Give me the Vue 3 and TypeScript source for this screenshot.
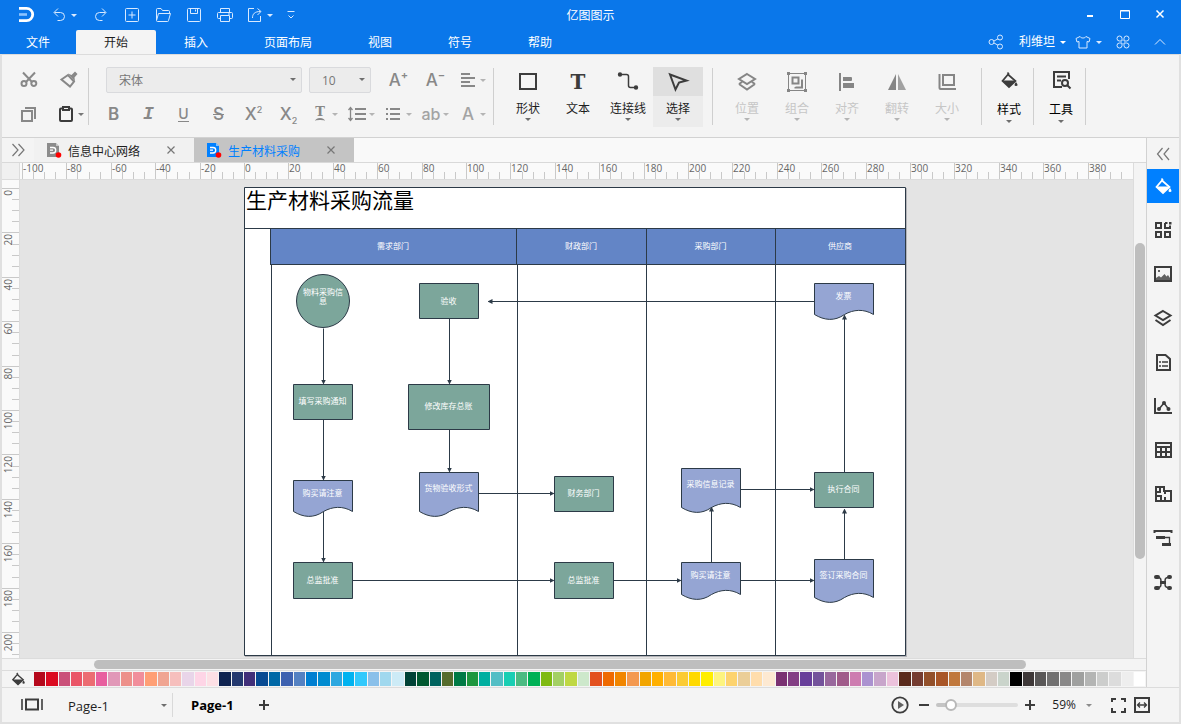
<script setup lang="ts">
import { computed, h, ref } from 'vue'

type Part = { d: string; w?: number; fill?: boolean; o?: number }

const s = (d: string, w = 1): Part => ({ d, w })
const f = (d: string, o = 1): Part => ({ d, fill: true, o })
const ring = (x: number, y: number, r: number) =>
  `M${x - r} ${y}a${r} ${r} 0 1 0 ${2 * r} 0a${r} ${r} 0 1 0 ${-2 * r} 0z`

const icons: Record<string, Part[]> = {
  undo: [s('M9 3.5L5 7.5L9 11.5M5.5 7.5H11.5a4 4 0 0 1 0 8H8.5')],
  redo: [s('M11 3.5L15 7.5L11 11.5M14.5 7.5H8.5a4 4 0 0 0 0 8H11.5')],
  add: [s('M4.5 3.5h11a1 1 0 0 1 1 1v11a1 1 0 0 1-1 1h-11a1 1 0 0 1-1-1v-11a1 1 0 0 1 1-1zM10 6.5v7M6.5 10h7')],
  folder: [s('M3.5 15V4.5a1 1 0 0 1 1-1H8l1.5 2h6a1 1 0 0 1 1 1v1.5M3.5 15.5L5.5 8.5h12l-2 7a1 1 0 0 1-1 1h-10a1 1 0 0 1-1-1z')],
  save: [s('M4.5 3.5h11a1 1 0 0 1 1 1v11a1 1 0 0 1-1 1h-11a1 1 0 0 1-1-1v-11a1 1 0 0 1 1-1zM6.5 3.5v5h7v-5M11.5 4.5v2')],
  print: [s('M5.5 7V3.5h9V7M5.5 13.5h-2a1 1 0 0 1-1-1v-4a1 1 0 0 1 1-1h13a1 1 0 0 1 1 1v4a1 1 0 0 1-1 1h-2M5.5 10.5h9v6h-9zM13 9h2')],
  exportTo: [s('M9 3.5H3.5v13h12V11M7.5 13c0-4 2-6.500 8-6.500M12.5 3.5l3.500 3l-3.500 3.500')],
  more: [s('M6.5 6.5h7M7.5 10.5l2.500 2.500l2.500-2.500')],
  share: [s(ring(5.5, 10, 2.5)), s(ring(14, 5.5, 2.5)), s(ring(14, 14.5, 2.5)), s('M8 9l4-2.200M8 11l4 2.200')],
  shirt: [s('M7 4.5L3 6.5l1 3.500l2-.500v6.500h8V9.5l2 .500l1-3.500l-4-2c-1 2-5 2-6 0z')],
  clover: [s('M9 9H6.5a2.500 2.500 0 1 1 2.500-2.500zM11 9h2.500A2.500 2.500 0 1 0 11 6.5zM9 11H6.5A2.500 2.500 0 1 0 9 13.5zM11 11h2.500a2.500 2.500 0 1 1-2.500 2.500z')],
  up: [s('M5 12.5l5-5l5 5')],
  min: [f('M7 10h6v2H7z')],
  max: [s('M5.5 5.5h9v8h-9zM5.5 6h9')],
  close: [s('M6.5 5.5l7 7M13.5 5.5l-7 7', 1.5)],
  cut: [s(ring(5, 13.5, 2.5), 2), s(ring(14.8, 13.5, 2.5), 2), s('M4 2.5L13 12M16 2.5L7 12', 2)],
  brush: [s('M2.5 9.5L9 5l6 6.500l-4 5z', 2), f('M9 3.5L12.5 5L16 1.5L18.5 4L15.5 7.5L16 11.5z')],
  copy: [s('M3 7h10v10H3z', 2), s('M6 4h10v11', 2)],
  paste: [s('M6.5 4.5H5a1 1 0 0 0-1 1V16a1 1 0 0 0 1 1h10a1 1 0 0 0 1-1V5.5a1 1 0 0 0-1-1h-1.500', 2), s('M7 3h6v3H7z', 2)],
  align: [s('M3 4h9M3 8h14M3 12h9M3 16h14', 2)],
  spacing: [s('M8 5h11M8 10h11M8 15h11', 2), s('M3.5 3.5v13M1.5 6l2-2.500l2 2.500M1.5 14l2 2.500l2-2.500', 1.3)],
  list: [s('M6 5h10M6 10h10M6 15h10M2 5h2M2 10h2M2 15h2', 2)],
  shape: [s('M4 4h16v15H4z', 2)],
  connector: [s('M6 4.5h4.500a2 2 0 0 1 2 2v9a2 2 0 0 0 2 2H19', 1.5), f(ring(4, 4.5, 2.2)), f(ring(20, 17.5, 2.2))],
  pointer: [s('M4 4.5L20.5 10.5L13 12.5L9.5 19.5z', 2)],
  layers: [s('M12 4l8 5l-8 5l-8-5zM4 14l8 5.500l8-5.500M4 14l3-2M20 14l-3-2', 2)],
  group: [s('M3.5 3.5h17v17h-17z'), f('M2 2h3v3H2zM19 2h3v3h-3zM2 19h3v3H2zM19 19h3v3h-3z'), s('M7.5 7.5h6v6h-6zM16 10.5h1v7h-6.500V17', 2)],
  alignObj: [s('M5 3v18', 2), f('M8 7h8a1 1 0 0 1 1 1v2a1 1 0 0 1-1 1H8zM8 13h11v5H8z')],
  flip: [f('M11 4v16H3z'), f('M13 4v16h8z', 0.75)],
  size: [s('M8 5h11v10H8z', 2), s('M4.5 4v14a1 1 0 0 0 1 1H21', 2)],
  bucket: [s('M8.5 2.5l1.500 2M9 4.5l7.500 6.500l-6.500 6L3.5 11z', 1.7), f('M3.5 10.5h13L10 17zM17 12c2 2.500 2 4 0 4s-2-1.500 0-4z')],
  tools: [s('M20 11V4H5v15h8', 2), s('M8 8.5h9M8 12.5h4', 2), s(ring(16, 15, 3), 2), s('M18 17l3.500 3.500', 2)],
  open: [s('M4.5 4l5.500 6l-5.500 6M10.5 4l5.500 6l-5.500 6', 1.2)],
  collapse: [s('M9.5 4l-5 6l5 6M16 4l-5 6l5 6', 1.2)],
  tabClose: [s('M6.5 6.5l7 7M13.5 6.5l-7 7', 1.2)],
  library: [s('M3 3h5v5H3zM12 3h2.500M17 5.5V8h-5V3M3 12h5v5H3zM12 12h5v5h-5z', 2), f('M16 2h2.500v2.500H16z')],
  image: [s('M2 3h16v14H2z', 2), f('M3 16v-2l3-2l2 1.500L11.5 10l2 2.500L15 11l2 3v2zM5 6h2v2H5z', 0.8)],
  stack: [s('M10 3l7.500 4.500l-7.500 4.500l-7.500-4.500zM2.5 12L10 17l7.500-5', 2)],
  note: [s('M4 3h8.500l4.500 4v11H4z', 2), s('M6 10h2M9 10h6M6 14h2M9 14h6', 1.5)],
  chart: [s('M2 2v15h17', 2), s('M6 13L11 7l4.500 6', 1.5), f(ring(6, 13, 2)), f(ring(11, 7, 2)), f(ring(15.5, 13, 2))],
  table: [s('M3 3h15v14H3z', 2), s('M3 7h15M8 8v9M13 8v9M3 12h15', 2)],
  plan: [s('M3 3h8v4h7v10H3zM7 3v5H3M3 12h5v5M12 13v4M12 10V7', 2)],
  roller: [s('M1.5 5V3h17v2', 2), f('M3 8h9v3H3zM9 15h9v3H9z'), s('M12 9.5h4.500V15', 1.3)],
  mind: [f('M1 5a2 2 0 0 1 2-2h2a2 2 0 0 1 0 4H3a2 2 0 0 1-2-2zM14 5a2 2 0 0 1 2-2h1a2 2 0 0 1 0 4h-1a2 2 0 0 1-2-2zM1 16a2 2 0 0 1 2-2h2a2 2 0 0 1 0 4H3a2 2 0 0 1-2-2zM14 16a2 2 0 0 1 2-2h1a2 2 0 0 1 0 4h-1a2 2 0 0 1-2-2zM7 9h6v3H7z'), s('M5 5.5c3 0 3 2 3 5s0 5-3 5M15 5.5c-3 0-3 2-3 5s0 5 3 5', 1.5)],
  pages: [s('M6 6.500h12v10H6z', 2), s('M2 6v11M22 6v11', 1.6)],
  plus: [s('M10 5v10M5 10h10', 2)],
  minus: [s('M5 10h10', 2)],
  play: [s(ring(10, 10, 7.7), 1.8), f('M8 6l6 4l-6 4z', 0.8)],
  full: [s('M4 7V4h4M13 4h4v3M17 13v4h-4M8 17H4v-4', 2)],
  fit: [s('M3 3h14v14H3z', 2), s('M5.5 10h9M8 7.5L5.5 10L8 12.5M12 7.5l2.500 2.500l-2.500 2.500', 1.3)],
}

const Icon = (props: { name: string; size?: number }) => {
  const n = props.size ?? 20
  return h(
    'svg',
    { width: n, height: n, viewBox: `0 0 ${n} ${n}`, 'aria-hidden': 'true' },
    icons[props.name].map((p) =>
      h('path', {
        d: p.d,
        fill: p.fill ? 'currentColor' : 'none',
        stroke: p.fill ? 'none' : 'currentColor',
        'stroke-width': p.w,
        opacity: p.o,
      }),
    ),
  )
}
Icon.props = ['name', 'size']

const quick = [
  { icon: 'redo', label: '重做' },
  { icon: 'add', label: '新建' },
  { icon: 'folder', label: '打开' },
  { icon: 'save', label: '保存' },
  { icon: 'print', label: '打印' },
]
const menus = ['文件', '开始', '插入', '页面布局', '视图', '符号', '帮助']
const menu = ref('开始')

const tools = ['形状', '文本', '连接线', '选择'] as const
const toolIcons: Record<string, string> = { 形状: 'shape', 连接线: 'connector', 选择: 'pointer' }
const tool = ref('选择')
const arrange = [
  { icon: 'layers', label: '位置' },
  { icon: 'group', label: '组合' },
  { icon: 'alignObj', label: '对齐' },
  { icon: 'flip', label: '翻转' },
  { icon: 'size', label: '大小' },
]

const docs = ['信息中心网络', '生产材料采购']
const doc = ref('生产材料采购')

const panels = [
  { icon: 'bucket', label: '填充' },
  { icon: 'library', label: '符号库' },
  { icon: 'image', label: '图片' },
  { icon: 'stack', label: '图层' },
  { icon: 'note', label: '注释' },
  { icon: 'chart', label: '图表' },
  { icon: 'table', label: '表格' },
  { icon: 'plan', label: '平面图' },
  { icon: 'roller', label: '主题' },
  { icon: 'mind', label: '导图' },
]
const panel = ref('填充')

const ORIGIN_X = 224
const ORIGIN_Y = 8
const UNIT = 2.22
const ticks = (origin: number, from: number, to: number) => {
  const out: { pos: number; value: number; major: boolean }[] = []
  for (let v = from; v <= to; v += 5) {
    out.push({ pos: Math.round(origin + v * UNIT), value: v, major: v % 20 === 0 })
  }
  return out
}
const xTicks = ticks(ORIGIN_X, -100, 395)
const yTicks = ticks(ORIGIN_Y, 0, 210)

const heads = [
  { x: 26, w: 246, label: '需求部门' },
  { x: 272, w: 130, label: '财政部门' },
  { x: 402, w: 129, label: '采购部门' },
  { x: 531, w: 130, label: '供应商' },
]
const lanes = [27, 273, 402, 531]

type Node = { kind: 'rect' | 'doc'; x: number; y: number; w: number; h: number; label: string; ty: number }
const nodes: Node[] = [
  { kind: 'rect', x: 175, y: 96, w: 59, h: 35, label: '验收', ty: 114 },
  { kind: 'rect', x: 49, y: 197, w: 59, h: 35, label: '填写采购通知', ty: 214 },
  { kind: 'rect', x: 164, y: 197, w: 81, h: 45, label: '修改库存总账', ty: 219 },
  { kind: 'doc', x: 49, y: 293, w: 59, h: 35, label: '购买请注意', ty: 306 },
  { kind: 'doc', x: 175, y: 285, w: 59, h: 43, label: '货物验收形式', ty: 301 },
  { kind: 'rect', x: 49, y: 375, w: 59, h: 36, label: '总监批准', ty: 393 },
  { kind: 'rect', x: 310, y: 289, w: 59, h: 35, label: '财务部门', ty: 306 },
  { kind: 'rect', x: 310, y: 375, w: 59, h: 36, label: '总监批准', ty: 393 },
  { kind: 'doc', x: 437, y: 281, w: 59, h: 43, label: '采购信息记录', ty: 297 },
  { kind: 'doc', x: 437, y: 375, w: 59, h: 36, label: '购买请注意', ty: 388 },
  { kind: 'doc', x: 570, y: 96, w: 59, h: 35, label: '发票', ty: 109 },
  { kind: 'rect', x: 570, y: 285, w: 59, h: 35, label: '执行合同', ty: 302 },
  { kind: 'doc', x: 570, y: 372, w: 59, h: 42, label: '签订采购合同', ty: 388 },
]
const outline = (n: Node) =>
  n.kind === 'rect'
    ? `M${n.x} ${n.y}h${n.w}v${n.h}h${-n.w}z`
    : `M${n.x} ${n.y}h${n.w}v${n.h - 4}c-10 -6 -20 -5 -29 0c-10 7 -20 6 -30 0z`

const links = [
  'M79 141V196', 'M79 232V292', 'M79 324V374', 'M205 131V196', 'M205 242V284',
  'M234 306H309', 'M108 393H309', 'M369 393H436', 'M496 393H569', 'M496 302H569',
  'M467 375V320', 'M600 372V322', 'M600 285V128', 'M570 114H244',
]

const palette = (
  'b5081b db0a20 ca5079 ea5567 ec6c72 e85f9f e198b8 ed908a f18e9b ff9f75 f0a592 f6bfbd e9d5e9 fed5e6 fde0e5 ' +
  '0e2350 24396f 412f79 074a92 0068a6 3d61b0 5481c2 007fd1 008bd0 2da8e0 00b3f0 32c9fc 8ac0ea a0d8ee cdebf6 ' +
  '004236 005830 00635f 566c2d 007a45 1e963e 00afa0 53bec5 19ceb3 4bbb82 00b156 7fba12 a3d064 bfd843 cde8cb ' +
  'e3511f ef6a00 f18600 f4994f f2a500 ffb000 ffba36 fbcb34 ffd900 ffee00 fdf47f fdd36e ebce98 ffddac fde9d2 ' +
  '7a3172 833e84 683f9a 74539b 99689d a05b8a cd7cb0 ab92d0 c8a5cb ecc2dc 5a2a1c 753c31 93502a a95627 c0783d ' +
  'b4866c dfb886 d4ccc5 cad4cb 000000 3e3838 595757 717070 898888 9fa09f b4b5b4 cccdcc dcdcdc eeeeee ffffff'
).split(' ')

const slider = ref(13)
const zoomText = computed(() => `${Math.max(1, Number(slider.value) + 46)}%`)
const nudge = (by: number) => {
  slider.value = Math.min(100, Math.max(0, Number(slider.value) + by))
}
</script>

<template>
  <div class="app">
    <header class="top">
      <div class="titlebar">
        <div class="quick">
          <svg class="logo" width="20" height="20" viewBox="0 0 20 20" aria-hidden="true">
            <path d="M2 3.300h7.500a6.200 6.200 0 0 1 0 12.400H2" fill="none" stroke="#fff" stroke-width="2.800" />
            <path d="M2 9.500h8" stroke="#8cc4ff" stroke-width="2.600" />
          </svg>
          <button class="split undo" aria-label="撤销"><Icon name="undo" /><i class="caret"></i></button>
          <button v-for="q in quick" :key="q.icon" class="q" :aria-label="q.label"><Icon :name="q.icon" /></button>
          <button class="split" aria-label="导出"><Icon name="exportTo" /><i class="caret"></i></button>
          <button class="q narrow" aria-label="更多"><Icon name="more" /></button>
        </div>
        <div class="apptitle">亿图图示</div>
        <div class="winctl">
          <button aria-label="最小化"><Icon name="min" /></button>
          <button aria-label="最大化"><Icon name="max" /></button>
          <button aria-label="关闭"><Icon name="close" /></button>
        </div>
      </div>
      <div class="menubar">
        <nav>
          <button v-for="m in menus" :key="m" :class="{ file: m === '文件', on: m === menu }" @click="menu = m">{{ m }}</button>
        </nav>
        <div class="account">
          <button aria-label="分享"><Icon name="share" /></button>
          <button class="user">利维坦<i class="caret"></i></button>
          <button class="skin" aria-label="皮肤"><Icon name="shirt" /><i class="caret"></i></button>
          <button class="apps" aria-label="应用"><Icon name="clover" /></button>
          <button aria-label="收起"><Icon name="up" /></button>
        </div>
      </div>
    </header>

    <div class="frame">
      <section class="ribbon">
        <div class="clip">
          <button aria-label="剪切"><Icon name="cut" /></button>
          <button class="brush" aria-label="格式刷"><Icon name="brush" /></button>
          <button aria-label="复制"><Icon name="copy" /></button>
          <button class="split dark" aria-label="粘贴"><Icon name="paste" /><i class="caret"></i></button>
        </div>
        <div class="sep"></div>
        <div class="font">
          <div class="line first">
            <label class="pick family">
              <select aria-label="字体"><option>宋体</option></select><i class="caret"></i>
            </label>
            <label class="pick points">
              <select aria-label="字号"><option>10</option></select><i class="caret"></i>
            </label>
            <button class="wide" aria-label="增大字号"><span class="g">A<sup class="sign">+</sup></span></button>
            <button class="wide" aria-label="减小字号"><span class="g">A<sup class="sign">−</sup></span></button>
            <button class="split" aria-label="对齐方式"><Icon name="align" /><i class="caret"></i></button>
          </div>
          <div class="line">
            <button class="fmt" aria-label="粗体"><span class="g bold">B</span></button>
            <button class="fmt" aria-label="斜体"><span class="g ital">I</span></button>
            <button class="fmt" aria-label="下划线"><span class="g under">U</span></button>
            <button class="fmt" aria-label="删除线"><span class="g strike">S</span></button>
            <button class="fmt" aria-label="上标"><span class="g">X<sup>2</sup></span></button>
            <button class="fmt" aria-label="下标"><span class="g">X<sub>2</sub></span></button>
            <button class="split" aria-label="文字效果"><span class="g slab">T</span><i class="caret"></i></button>
            <button class="split" aria-label="行距"><Icon name="spacing" /><i class="caret"></i></button>
            <button class="split" aria-label="项目符号"><Icon name="list" /><i class="caret"></i></button>
            <button class="split light" aria-label="大小写"><span class="g ab">ab</span><i class="caret"></i></button>
            <button class="split light" aria-label="字体颜色"><span class="g">A</span><i class="caret"></i></button>
          </div>
        </div>
        <div class="sep near"></div>
        <div class="bigs">
          <button v-for="t in tools" :key="t" class="big" :class="{ on: t === tool }" @click="tool = t">
            <span class="pic">
              <Icon v-if="toolIcons[t]" :name="toolIcons[t]" :size="24" />
              <span v-else class="slabbig">T</span>
            </span>
            <span class="cap">{{ t }}</span>
            <i v-if="t !== '文本'" class="caret"></i>
          </button>
        </div>
        <div class="sep"></div>
        <div class="bigs">
          <button v-for="a in arrange" :key="a.icon" class="big off" disabled>
            <span class="pic"><Icon :name="a.icon" :size="24" /></span>
            <span class="cap">{{ a.label }}</span>
            <i class="caret"></i>
          </button>
        </div>
        <div class="sep"></div>
        <button class="big tall"><span class="pic"><Icon name="bucket" /></span><span class="cap">样式</span><i class="caret"></i></button>
        <div class="sep"></div>
        <button class="big tall"><span class="pic"><Icon name="tools" :size="24" /></span><span class="cap">工具</span><i class="caret"></i></button>
        <div class="sep"></div>
      </section>

      <div class="work">
        <main class="main">
          <div class="tabs">
            <button class="expand" aria-label="展开"><Icon name="open" /></button>
            <div v-for="d in docs" :key="d" class="tab" :class="{ on: d === doc }">
              <button class="name" @click="doc = d">
                <svg width="16" height="16" viewBox="0 0 16 16" aria-hidden="true">
                  <path d="M0 1h9l3 3v11H0z" fill="currentColor" />
                  <path d="M9 1v3h3z" fill="#fff" opacity="0.500" />
                  <path d="M3 5.500h3a2.500 2.500 0 0 1 0 5.500H3M3 8.200h3" fill="none" stroke="#fff" stroke-width="1.300" />
                  <circle cx="11.500" cy="13" r="2.800" fill="#f00" />
                </svg>
                <span>{{ d }}</span>
              </button>
              <button class="x" aria-label="关闭标签"><Icon name="tabClose" /></button>
            </div>
          </div>

          <div class="stage">
            <div class="corner"></div>
            <svg class="ruler hr" aria-hidden="true">
              <g v-for="t in xTicks" :key="t.value">
                <rect :x="t.pos" :y="t.major ? 0 : 9" width="1" :height="t.major ? 16 : 7" />
                <text v-if="t.major" :x="t.pos + 1" y="9">{{ t.value }}</text>
              </g>
            </svg>
            <div class="vscroll"><div class="gap"></div><div class="thumb"></div><div class="rest"></div></div>
            <svg class="ruler vr" aria-hidden="true">
              <g v-for="t in yTicks" :key="t.value">
                <rect :x="t.major ? 0 : 10" :y="t.pos" :width="t.major ? 17 : 7" height="1" />
                <text v-if="t.major" :transform="`translate(10 ${t.pos + 2}) rotate(-90)`" text-anchor="end">{{ t.value }}</text>
              </g>
            </svg>
            <div class="canvas">
              <svg class="sheet" width="663" height="471" viewBox="0 0 663 471" role="img" aria-label="生产材料采购流量">
                <defs>
                  <marker id="tip" markerWidth="5" markerHeight="5" refX="4" refY="2.500" orient="auto" markerUnits="userSpaceOnUse">
                    <path d="M0 0L5 2.500L0 5z" fill="#2c3a47" />
                  </marker>
                </defs>
                <rect x="1" y="1" width="662" height="469" fill="#b4b4b8" />
                <g transform="translate(0.500 0.500)" fill="none" stroke="#2c3a47">
                  <path d="M0 0h661v468H0zM0 41h661" fill="#fff" />
                  <path v-for="x in lanes" :key="x" :d="`M${x} 77V468`" />
                  <rect v-for="c in heads" :key="c.label" :x="c.x" y="41" :width="c.w" height="36" fill="#6385c6" />
                  <ellipse cx="78.500" cy="113.500" rx="26.500" ry="26.500" fill="#7ca69b" />
                  <path v-for="(n, i) in nodes" :key="i" :d="outline(n)" :fill="n.kind === 'rect' ? '#7ca69b' : '#95a5d3'" />
                  <path v-for="l in links" :key="l" :d="l" marker-end="url(#tip)" />
                </g>
                <text class="heading" x="2" y="21">生产材料采购流量</text>
                <g class="tags">
                  <text v-for="c in heads" :key="c.label" :x="c.x + c.w / 2" y="62">{{ c.label }}</text>
                  <text x="79" y="108">物料采购信</text>
                  <text x="79" y="117">息</text>
                  <text v-for="(n, i) in nodes" :key="i" :x="n.x + n.w / 2" :y="n.ty + 3">{{ n.label }}</text>
                </g>
              </svg>
            </div>
          </div>

          <div class="hscroll"><div class="gap"></div><div class="thumb"></div><div class="rest"></div></div>
          <div class="palette">
            <button class="fill" aria-label="填充颜色"><Icon name="bucket" /></button>
            <button v-for="c in palette" :key="c" class="sw" :style="{ background: '#' + c }" :aria-label="'#' + c"></button>
          </div>
        </main>

        <aside class="side">
          <button class="fold" aria-label="折叠"><Icon name="collapse" /></button>
          <button v-for="p in panels" :key="p.icon" :class="{ on: p.label === panel }" :aria-label="p.label" @click="panel = p.label">
            <Icon :name="p.icon" />
          </button>
        </aside>
      </div>

      <footer class="foot">
        <button class="pages" aria-label="页面视图"><Icon name="pages" :size="24" /></button>
        <label class="pagepick">
          <select aria-label="页面"><option>Page-1</option></select><i class="caret"></i>
        </label>
        <div class="bar"></div>
        <button class="page">Page-1</button>
        <button aria-label="添加页面"><Icon name="plus" /></button>
        <div class="right">
          <button aria-label="播放"><Icon name="play" /></button>
          <button aria-label="缩小" @click="nudge(-1)"><Icon name="minus" /></button>
          <input v-model="slider" type="range" min="0" max="100" aria-label="缩放" :style="{ '--fill': slider + '%' }" />
          <button aria-label="放大" @click="nudge(1)"><Icon name="plus" /></button>
          <button class="pct">{{ zoomText }}<i class="caret"></i></button>
          <button aria-label="全屏"><Icon name="full" /></button>
          <button aria-label="适应页面"><Icon name="fit" /></button>
        </div>
      </footer>
    </div>
  </div>
</template>

<style>
body {
  margin: 0;
  overflow: hidden;
}
</style>

<style scoped>
.app {
  height: 100vh;
  display: flex;
  flex-direction: column;
  font: 12px/16px "Open Sans", "Noto Sans CJK SC", sans-serif;
  color: #1e1e1e;
  background: #f4f4f4;
}
.app * {
  box-sizing: border-box;
}
button {
  display: flex;
  align-items: center;
  justify-content: center;
  padding: 0;
  border: 0;
  background: none;
  color: inherit;
  font: inherit;
  white-space: nowrap;
  flex: none;
}
svg {
  display: block;
  flex: none;
}
.caret {
  flex: none;
  border: 3px solid transparent;
  border-top-color: currentColor;
  border-bottom: 0;
}
.split {
  width: 37px;
  padding-left: 4px;
  gap: 2px;
  justify-content: flex-start;
}

.top {
  background: #0a77ea;
  color: #fff;
}
.titlebar {
  height: 30px;
  display: grid;
  grid-template-columns: 1fr auto 1fr;
  align-items: center;
}
.apptitle {
  padding-top: 2px;
}
.quick {
  display: flex;
  color: #d9eaff;
}
.logo {
  margin: 0 7px 0 17px;
}
.quick .split {
  padding-left: 5px;
}
.quick .undo {
  margin-right: 4px;
}
.q {
  width: 31px;
}
.q.narrow {
  width: 28px;
}
.winctl {
  display: flex;
  justify-content: flex-end;
  padding-right: 4px;
}
.winctl button {
  width: 35px;
}
.menubar {
  height: 24px;
  display: flex;
  justify-content: space-between;
}
nav {
  display: flex;
}
nav button {
  height: 24px;
  padding: 2px 28px 0;
}
nav .file {
  padding: 2px 26px 0;
}
nav .on {
  background: #f4f4f4;
  color: #1e1e1e;
  border-radius: 2px 2px 0 0;
}
.account {
  display: flex;
  align-items: center;
  padding-right: 11px;
  color: #d9eaff;
}
.account button:first-child {
  margin-right: 13px;
}
.account .user {
  color: #fff;
  gap: 5px;
  margin-right: 7px;
}
.account .skin {
  gap: 3px;
  margin-right: 11px;
}
.account .apps {
  margin-right: 17px;
}

.frame {
  flex: 1;
  min-height: 0;
  display: flex;
  flex-direction: column;
  border: 2px solid #e0e0e0;
  border-top: 0;
}
.ribbon {
  height: 84px;
  display: flex;
  border-top: 1px solid #dcdcdc;
  border-bottom: 1px solid #d2d2d2;
  color: #888;
}
.sep {
  width: 1px;
  height: 57px;
  margin-top: 13px;
  background: #cfcfcf;
}
.clip {
  display: grid;
  grid-template: 34px 34px / 38px 36px;
  padding: 8px 0 0 12px;
}
.clip button:nth-child(odd) {
  width: 30px;
}
.clip .brush {
  width: 34px;
}
.dark {
  color: #3c3c3c;
}
.dark .caret {
  color: #777;
}
.font {
  padding: 8px 0 0 7px;
}
.line {
  display: flex;
  align-items: center;
  height: 34px;
}
.first {
  padding-left: 10px;
}
.font .split .caret,
.off .caret {
  color: #b4b4b4;
}
.pick {
  position: relative;
  height: 26px;
}
.pick select {
  width: 100%;
  height: 100%;
  appearance: none;
  border: 1px solid #d9dadd;
  border-radius: 2px;
  background: #ececec;
  color: #777;
  font: inherit;
  padding: 2px 12px 0;
}
.pick .caret,
.pagepick .caret {
  position: absolute;
  right: 6px;
  top: 11px;
  color: #6e6e6e;
  pointer-events: none;
}
.family {
  width: 196px;
  margin-right: 7px;
}
.points {
  width: 62px;
  margin-right: 9px;
}
.wide {
  width: 37px;
}
.fmt {
  width: 35px;
}
.g {
  font: 500 17px/20px Inter, sans-serif;
  min-width: 20px;
  text-align: center;
}
.g sup,
.g sub {
  font-size: 9px;
  line-height: 0;
}
.g .sign {
  font-size: 11px;
  font-weight: 600;
}
.bold {
  font-weight: 600;
}
.ital {
  font: italic bold 18px/20px "Liberation Mono", monospace;
}
.under {
  font-size: 14px;
  line-height: 14px;
  min-width: 10px;
  border-bottom: 1px solid;
}
.strike {
  text-decoration: line-through 1px;
}
.ab {
  font-size: 16px;
}
.slab {
  font: bold 13px/14px "DejaVu Serif", serif;
  padding-bottom: 4px;
  position: relative;
}
.slab::after {
  content: "";
  position: absolute;
  left: 5px;
  bottom: -1px;
  width: 10px;
  height: 4px;
  border-top: 2px solid;
  border-radius: 50%;
}
.light {
  color: #a3a3a3;
}
.near {
  margin-left: 2px;
}
.bigs {
  display: flex;
  margin: 0 9px;
}
.big {
  width: 50px;
  height: 60px;
  margin-top: 12px;
  flex-direction: column;
  justify-content: flex-start;
  color: #3c3c3c;
}
.pic {
  width: 100%;
  height: 29px;
  display: grid;
  place-items: center;
}
.cap {
  margin: 5px 0 1px;
  color: #1e1e1e;
}
.big .caret {
  color: #6e6e6e;
}
.big.on {
  background: #ececec;
}
.big.on .pic {
  background: #dfdfdf;
}
.big.off {
  color: #858585;
}
.big.off .cap {
  color: #c6c6c6;
}
.big.off .caret {
  color: #b4b4b4;
}
.big.tall {
  width: 48px;
  margin-left: 3px;
}
.tall .pic {
  height: 25px;
}
.tall .cap {
  margin: 10px 0 2px;
  color: #000;
}
.slabbig {
  font: bold 20px/24px "DejaVu Serif", serif;
}

.work {
  flex: 1;
  min-height: 0;
  display: flex;
}
.main {
  flex: 1;
  min-width: 0;
  display: flex;
  flex-direction: column;
  border-right: 1px solid #d2d2d2;
}
.tabs {
  height: 25px;
  display: flex;
  background: #f9f9f9;
  border-bottom: 1px solid #d9d9d9;
}
.expand {
  width: 32px;
  color: #777;
  background: #f4f4f4;
}
.tab {
  width: 160px;
  display: flex;
  align-items: center;
  justify-content: space-between;
  padding: 0 13px;
  background: #f1f1f1;
}
.tab .name {
  gap: 5px;
  color: #8c8c8c;
}
.tab .name span {
  padding-top: 3px;
  color: #1e1e1e;
}
.tab.on {
  background: #c4c4c4;
}
.tab.on .name,
.tab.on .name span {
  color: #0080ff;
}
.x {
  color: #777;
}
.stage {
  flex: 1;
  min-height: 0;
  display: grid;
  grid-template: 17px minmax(0, 1fr) / 18px minmax(0, 1fr) 13px;
}
.corner {
  background: #f0f0f0;
  border: 1px solid #dcdcdc;
  border-width: 0 1px 1px 0;
}
.ruler {
  width: 100%;
  height: 100%;
  overflow: visible;
  background: #fafafa;
  fill: #c9c9c9;
}
.ruler text {
  font-size: 10px;
  fill: #666;
}
.hr {
  border-bottom: 1px solid #dcdcdc;
}
.vr {
  border-right: 1px solid #dcdcdc;
}
.vscroll {
  grid-area: 1 / 3 / 3 / 4;
  display: flex;
  flex-direction: column;
  padding: 0 1px;
  border-left: 1px solid #dcdcdc;
  background: #f4f4f4;
}
.thumb {
  background: #bebebe;
  border-radius: 5px;
}
.vscroll .gap {
  flex: 80;
}
.vscroll .thumb {
  flex: 316;
}
.vscroll .rest {
  flex: 99;
}
.canvas {
  position: relative;
  overflow: hidden;
  background: #e4e4e4;
}
.sheet {
  position: absolute;
  left: 224px;
  top: 7px;
}
.heading {
  font-size: 21px;
  fill: #000;
}
.tags {
  font-size: 8px;
  fill: #fff;
  text-anchor: middle;
}
.hscroll {
  height: 12px;
  display: flex;
  padding: 1px 13px 1px 0;
  border-top: 1px solid #dcdcdc;
}
.hscroll .gap {
  flex: 92;
}
.hscroll .thumb {
  flex: 932;
}
.hscroll .rest {
  flex: 107;
}
.palette {
  height: 17px;
  display: flex;
  align-items: stretch;
  padding: 1px 0;
  border-top: 1px solid #dcdcdc;
}
.fill {
  width: 32px;
  color: #3c3c3c;
}
.fill svg {
  width: 16px;
  height: 16px;
}
.sw {
  flex: 1;
  border-right: 1px solid #f4f4f4;
}
.side {
  width: 32px;
  display: flex;
  flex-direction: column;
  gap: 10px;
  color: #3c3c3c;
}
.side button {
  height: 34px;
}
.side .fold {
  height: 31px;
  margin-bottom: -10px;
  color: #777;
}
.side .on {
  background: #0080ff;
  color: #fff;
}

.foot {
  height: 35px;
  display: flex;
  align-items: center;
  border-top: 1px solid #dcdcdc;
  color: #3c3c3c;
}
.pages {
  margin: 0 8px 0 18px;
}
.pagepick {
  position: relative;
  width: 116px;
}
.pagepick select {
  width: 100%;
  height: 24px;
  padding: 2px 16px 0;
  border: 0;
  appearance: none;
  background: none;
  color: #1e1e1e;
  font: inherit;
  font-size: 13px;
}
.pagepick .caret {
  right: 1px;
}
.bar {
  width: 1px;
  height: 24px;
  margin: 0 18px 0 4px;
  background: #d9d9d9;
}
.page {
  margin-right: 20px;
  color: #000;
  font-size: 13px;
  font-weight: 700;
}
.right {
  margin-left: auto;
  padding-right: 27px;
  display: flex;
  align-items: center;
  gap: 4px;
}
input[type="range"] {
  appearance: none;
  width: 82px;
  height: 14px;
  margin: 0 -2px;
  background: none;
}
input[type="range"]::-webkit-slider-runnable-track {
  height: 4px;
  border-radius: 2px;
  background: linear-gradient(to right, #c4c4c4 var(--fill), #dedede var(--fill));
}
input[type="range"]::-webkit-slider-thumb {
  appearance: none;
  width: 12px;
  height: 12px;
  margin-top: -4px;
  border: 2px solid #b8b8b8;
  border-radius: 50%;
  background: #fff;
}
.pct {
  margin: 0 12px 0 8px;
  gap: 10px;
  color: #1e1e1e;
}
.pct .caret {
  color: #8c8c8c;
}
</style>
